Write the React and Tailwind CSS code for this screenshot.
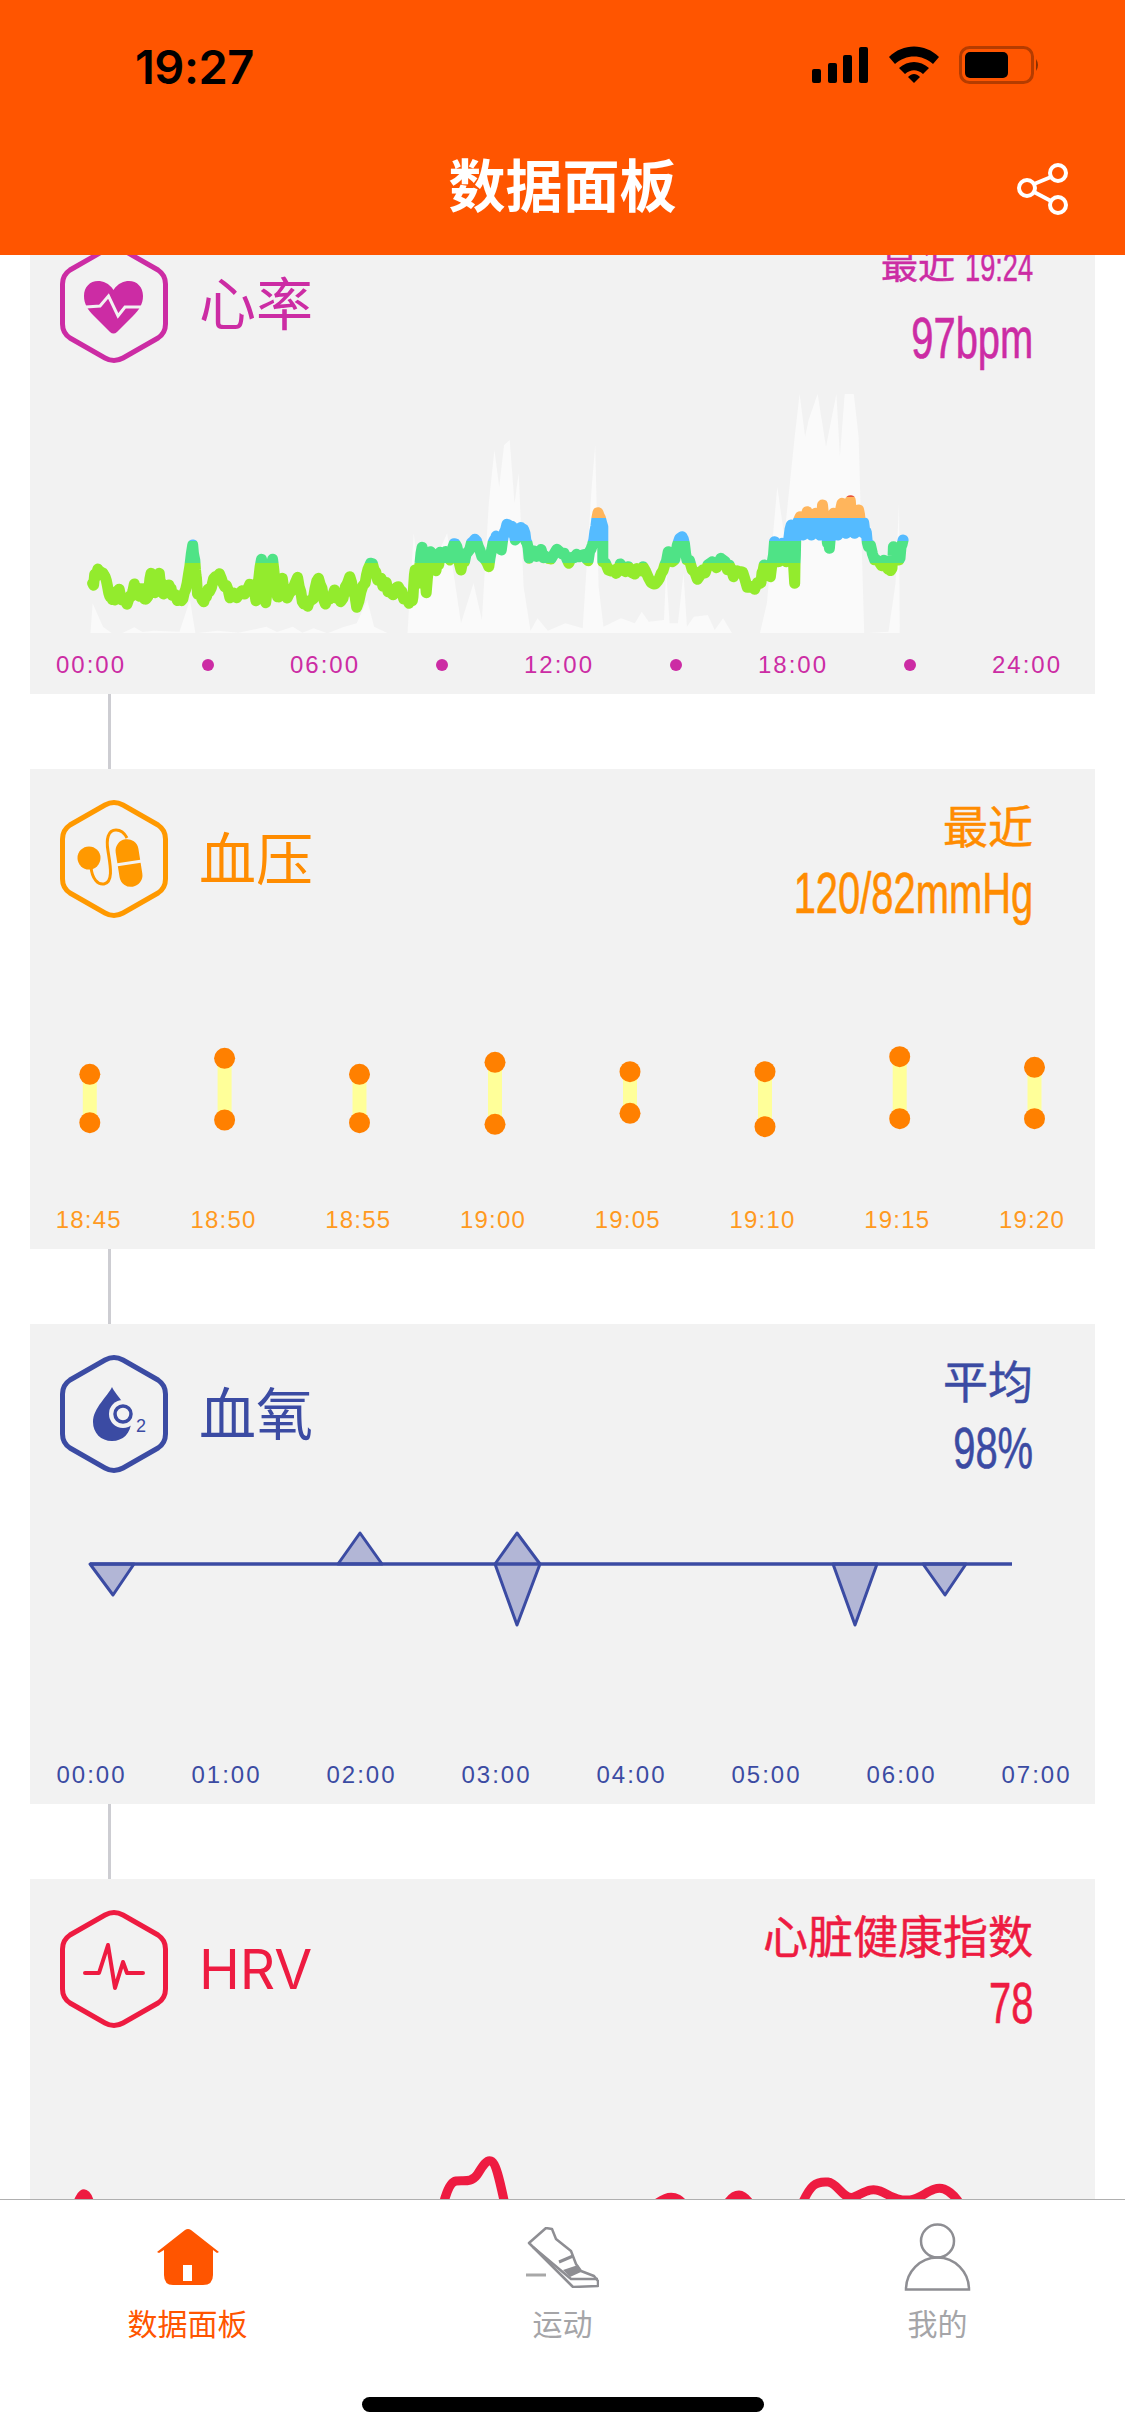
import React from "react";

const SANS = "font-['Liberation_Sans','Noto_Sans_CJK_SC',sans-serif]";

const HEX =
  "M45 6Q54 1 63 6L98 26Q105.5 31 105.5 40L105.5 80Q105.5 89 98 94L63 114Q54 119 45 114L10 94Q2.5 89 2.5 80L2.5 40Q2.5 31 10 26Z";

// traced from the chart, x and y are in stretched trace units, see toChart()
const HR_TRACE = [
  [90, 640], [96, 612], [102, 606], [108, 620], [115, 680], [122, 690], [127, 660], [132, 690], [142, 688], [150, 642], [156, 672],
  [162, 660], [168, 684], [174, 610], [180, 668], [186, 610], [192, 672], [200, 645], [206, 676], [218, 692], [226, 640], [234, 525],
  [238, 600], [241, 672], [250, 695], [258, 665], [270, 618], [280, 650], [290, 675], [305, 662], [320, 645], [325, 692], [333, 568],
  [339, 698], [349, 568], [356, 680], [363, 625], [370, 684], [385, 622], [394, 702], [405, 690], [415, 625], [425, 702], [438, 660],
  [447, 695], [460, 620], [470, 712], [482, 640], [490, 580], [500, 630], [510, 642], [520, 670], [530, 650], [540, 685], [550, 692],
  [554, 600], [558, 640], [564, 532], [570, 668], [576, 545], [584, 602], [592, 548], [604, 570], [612, 522], [620, 600], [630, 545],
  [640, 508], [650, 560], [660, 590], [666, 518], [672, 505], [678, 540], [684, 480], [692, 468], [698, 510], [704, 480], [712, 490], [718, 565],
  [732, 548], [745, 565], [762, 545], [775, 580], [790, 560], [803, 572], [811, 510], [817, 428], [824, 470], [824, 575], [840, 600], [852, 590],
  [870, 612], [882, 590], [897, 642], [908, 610], [918, 545], [924, 575], [938, 500], [945, 570], [960, 628], [975, 585], [1000, 575], [1012, 620],
  [1022, 605], [1035, 652], [1050, 640], [1056, 585], [1065, 620], [1071, 515], [1076, 575], [1082, 520], [1088, 575], [1095, 465], [1100, 640],
  [1102, 470], [1108, 440], [1112, 495], [1118, 425], [1124, 495], [1130, 430], [1136, 495], [1140, 405], [1146, 495], [1150, 535], [1156, 430],
  [1162, 495], [1168, 400], [1174, 490], [1180, 392], [1186, 490], [1192, 420], [1197, 480], [1200, 470], [1206, 530], [1218, 570], [1232, 585],
  [1240, 595], [1242, 530], [1250, 570], [1256, 510],
];

const HR_AREA = [
  [87, 790], [90, 700], [105, 770], [118, 790], [132, 790], [150, 772], [162, 786], [178, 782], [215, 785], [230, 690], [238, 790], [270, 782],
  [300, 788], [340, 770], [355, 786], [378, 770], [392, 788], [408, 775], [428, 790], [450, 772], [470, 760], [485, 690], [495, 770], [515, 790],
  [543, 790], [545, 720], [552, 490], [560, 620], [570, 540], [585, 560], [600, 490], [610, 620], [620, 760], [638, 640], [650, 750], [660, 400],
  [668, 240], [675, 350], [682, 225], [690, 210], [697, 400], [703, 310], [710, 650], [720, 782], [730, 745], [745, 782], [770, 760], [795, 775],
  [808, 350], [813, 225], [818, 650], [825, 770], [850, 745], [870, 760], [880, 725], [890, 755], [912, 750], [915, 600], [920, 760], [932, 760],
  [940, 610], [945, 770], [955, 740], [975, 735], [985, 780], [997, 745], [1010, 790], [1050, 790], [1060, 700], [1075, 350], [1085, 500], [1100, 200],
  [1107, 72], [1115, 200], [1120, 150], [1133, 72], [1145, 230], [1160, 72], [1165, 260], [1172, 72], [1185, 72], [1192, 200], [1200, 790],
  [1235, 785], [1245, 640], [1250, 400], [1251, 790],
];

const toChart = ([x, y]) => `${(x / 1.4385).toFixed(1)},${(y / 3 - 24).toFixed(1)}`;

// the real line is minute data, so roughen the traced one a bit
function roughen(trace) {
  const out = [];
  trace.forEach(([x, y], i) => {
    out.push([x, y]);
    const next = trace[i + 1];
    if (!next) return;
    for (let s = 1; s < 4; s++) {
      const t = s / 4;
      const r = Math.sin((i + s) * 12.9898) * 43758.5453;
      const jitter = (r - Math.floor(r) - 0.5) * 30;
      out.push([x + (next[0] - x) * t, y + (next[1] - y) * t + jitter]);
    }
  });
  return out;
}

const BP_X = [59.8, 194.6, 329.5, 465, 600, 735, 869.7, 1004.5];
const BP_TOP = [913, 865, 913, 877, 905, 905, 860, 892];
const BP_BOTTOM = [1058, 1050, 1058, 1063, 1030, 1070, 1046, 1046];

const O2_SHAPES = [
  "60,60 83,91 104,60",
  "308,60 330,29 352,60",
  "465,60 487,29 510,60 487,121",
  "803,60 825,121 847,60",
  "893,60 915,91 936,60",
];

function HeartIcon() {
  return (
    <>
      <path
        d="M53.5 46C49 39 43 37 38 37C30 37 24 43 24 52C24 60 28 66 34 72L50 88Q53.5 91 57 88L73 72C79 66 83 60 83 52C83 43 77 37 69 37C64 37 58 39 53.5 46Z"
        fill="currentColor"
      />
      <path d="M26 63L40 62L48.5 52L58 72L65 63L84 63" fill="none" stroke="#f2f2f2" strokeWidth="3" />
    </>
  );
}

function PressureIcon() {
  return (
    <>
      <circle cx="29" cy="59" r="11.5" fill="currentColor" />
      <path d="M31 68C32 80 38 86 44 85C54 83 50 65 48 52C46 40 48 31 56 31C61 31 65 35 67 39" fill="none" stroke="currentColor" strokeWidth="3" />
      <g transform="rotate(-9 69 64)">
        <rect x="57.5" y="40" width="23" height="48" rx="11.5" fill="currentColor" />
        <path d="M54 64L84 64" stroke="#f2f2f2" strokeWidth="3" />
      </g>
    </>
  );
}

function OxygenIcon() {
  return (
    <>
      <path d="M52 33C48 42 33 54 33 68C33 79 41 87 52 87C63 87 71 79 71 68C71 54 56 42 52 33Z" fill="currentColor" />
      <circle cx="63" cy="60" r="14" fill="#f2f2f2" />
      <circle cx="63" cy="60" r="8" fill="none" stroke="currentColor" strokeWidth="3.5" />
      <text x="76" y="78" fontSize="18" fill="currentColor" fontFamily="Liberation Sans">2</text>
    </>
  );
}

function PulseIcon() {
  return <path d="M25 64L39 64L48 36L55 79L63 53L67 64L83 64" fill="none" stroke="currentColor" strokeWidth="4" strokeLinejoin="round" strokeLinecap="round" />;
}

function HexBadge({ className, children }) {
  return (
    <svg viewBox="0 0 108 120" className={`h-[120px] w-[108px] shrink-0 ${className}`}>
      <path d={HEX} fill="none" stroke="currentColor" strokeWidth="5" />
      {children}
    </svg>
  );
}

function HeartChart() {
  const area = `0,239 ${HR_AREA.map(toChart).join(" ")}`;
  const line = roughen(HR_TRACE).map(toChart).join(" ");
  return (
    <svg viewBox="0 0 1065 239" className="block h-[239px] w-[1065px]">
      <defs>
        <linearGradient id="hrBands" gradientUnits="userSpaceOnUse" x1="0" y1="0" x2="0" y2="239">
          <stop offset="0.43" stopColor="#e8553a" />
          <stop offset="0.43" stopColor="#ffb55c" />
          <stop offset="0.5176" stopColor="#ffb55c" />
          <stop offset="0.5176" stopColor="#55bbff" />
          <stop offset="0.615" stopColor="#55bbff" />
          <stop offset="0.615" stopColor="#4fe386" />
          <stop offset="0.7085" stopColor="#4fe386" />
          <stop offset="0.7085" stopColor="#93eb2d" />
        </linearGradient>
      </defs>
      <polygon points={area} fill="#fafafa" />
      <polyline points={line} fill="none" stroke="url(#hrBands)" strokeWidth="11" strokeLinejoin="round" strokeLinecap="round" />
    </svg>
  );
}

function PressureChart() {
  return (
    <svg viewBox="0 0 1065 239" className="block h-[239px] w-[1065px]">
      {BP_X.map((x, i) => {
        const top = BP_TOP[i] / 3 - 179;
        const bottom = BP_BOTTOM[i] / 3 - 179;
        return (
          <g key={x}>
            <rect x={x - 7} y={top} width="14" height={bottom - top} fill="#ffff99" />
            <circle cx={x} cy={top} r="10.5" fill="#ff8000" />
            <circle cx={x} cy={bottom} r="10.5" fill="#ff8000" />
          </g>
        );
      })}
    </svg>
  );
}

function OxygenChart() {
  return (
    <svg viewBox="0 0 1065 239" className="block h-[239px] w-[1065px]">
      {O2_SHAPES.map((p) => (
        <polygon key={p} points={p} fill="#b2b6d6" stroke="#3b4ba3" strokeWidth="3" strokeLinejoin="round" />
      ))}
      <path d="M60 60L982 60" stroke="#3b4ba3" strokeWidth="3.5" />
    </svg>
  );
}

function HrvChart() {
  return (
    <svg viewBox="0 0 1065 239" className="block h-[239px] w-[1065px]">
      <path
        d="M40 170C46 150 50 130 56 136C62 142 64 170 70 190M404 190C410 165 414 124 426 122C434 121 441 124 447 116C451 110 456 100 461 102C467 104 472 130 484 190M620 150C632 139 640 136 648 140C656 144 670 170 680 170C688 170 695 136 709 136C720 136 730 165 745 190M770 150C780 125 786 122 798 123C808 124 814 142 824 138C834 134 840 128 850 132C860 136 866 142 880 141C892 140 902 126 914 130C922 133 930 140 945 175"
        fill="none"
        stroke="#ee1b41"
        strokeWidth="9"
        strokeLinecap="round"
      />
    </svg>
  );
}

function Axis({ labels, className }) {
  return (
    <div className={`grid h-[61px] items-center pt-[3px] text-[24px] ${className}`}>
      {labels.map((label, i) => (
        <div key={i} className="flex justify-center">
          {label === "dot" ? <span className="h-3 w-3 rounded-full bg-[#cc2ca4]" /> : label}
        </div>
      ))}
    </div>
  );
}

function Card({ tint, iconTint, axisTint, icon, title, titleClass, label, value, chart, axis }) {
  return (
    <section className={`mx-[30px] h-[480px] bg-[#f2f2f2] ${tint}`}>
      <div className="flex h-[180px] justify-between pl-[30px] pr-[62px] pt-[30px]">
        <div className="flex h-[120px] items-center gap-[31px]">
          <HexBadge className={iconTint}>{icon}</HexBadge>
          <span className={titleClass}>{title}</span>
        </div>
        <div className="-mt-[3px] flex flex-col items-end">
          <div className="flex h-[65px] items-center">{label}</div>
          <div className="flex h-[65px] items-center text-[57px] leading-none [-webkit-text-stroke:0.6px_currentColor]">
            <span className="inline-block origin-right scale-x-[.7] whitespace-nowrap">{value}</span>
          </div>
        </div>
      </div>
      {chart}
      <div className={axisTint}>{axis}</div>
    </section>
  );
}

function Connector() {
  return <div className="ml-[108px] h-[75px] w-[3px] bg-[#cdcdd2]" />;
}

function StatusBar() {
  return (
    <div className="flex h-[152px] items-start justify-between pl-[135px] pr-[84px] pt-[42px]">
      <span className="font-['Inter'] text-[47px] font-semibold leading-[50px] tracking-[-.5px] text-black">19:27</span>
      <svg viewBox="0 0 230 40" className="mt-[3px] h-[40px] w-[230px]">
        <rect x="1" y="24" width="9" height="14" rx="2" />
        <rect x="17" y="18" width="9" height="20" rx="2" />
        <rect x="32" y="10" width="9" height="28" rx="2" />
        <rect x="48" y="2" width="9" height="36" rx="2" />
        <path d="M78 12C92 -2 114 -2 128 12L122 19C111 9 95 9 84 19Z" />
        <path d="M88 23C97 15 109 15 118 23L112 29C106 24 100 24 94 29Z" />
        <path d="M97 32C101 28 105 28 109 32L103 38Z" />
        <rect x="149.5" y="2.5" width="72" height="35" rx="9" fill="none" stroke="#b53c00" strokeWidth="3" />
        <rect x="154" y="7" width="43" height="26" rx="5" />
        <path d="M225 14Q229 20 225 26Z" fill="#8a3000" />
      </svg>
    </div>
  );
}

function ShareIcon() {
  return (
    <svg viewBox="0 0 52 52" className="h-[52px] w-[52px]" fill="none" stroke="#fff" strokeWidth="4">
      <circle cx="10" cy="25" r="8" />
      <circle cx="41" cy="10" r="8" />
      <circle cx="41" cy="42" r="8" />
      <path d="M17 21L34 14M17 29L34 38" />
    </svg>
  );
}

function HomeTab() {
  return (
    <svg viewBox="0 0 62 56" className="h-[56px] w-[62px]">
      <path
        d="M28 1Q31 -1 34 1L62 23L60 24L56 21L56 46Q56 56 46 56L16 56Q7 56 7 46L7 21L2 24L0 23ZM26 36L26 52L35 52L35 36Z"
        fill="#ff5500"
        fillRule="evenodd"
      />
    </svg>
  );
}

function ShoeTab() {
  return (
    <svg viewBox="0 0 73 61" className="h-[61px] w-[73px]" fill="none" stroke="#8e8e93" strokeWidth="2.5" strokeLinejoin="round">
      <path d="M3 16L20 1L26 2L30 12L45 24L50 37L55 44L68 49L72 54L72 59L47 60Z" fill="#fff" />
      <path d="M7 20L45 52L72 52" />
      <path d="M33 35L47 29" strokeWidth="3" />
      <path d="M37 43L52 38L55 45L44 50Z" fill="#8e8e93" stroke="none" />
      <path d="M0 48L20 48" stroke="#a8a8a8" strokeWidth="3" />
    </svg>
  );
}

function PersonTab() {
  return (
    <svg viewBox="0 0 67 68" className="h-[68px] w-[67px]" fill="none" stroke="#8e8e93" strokeWidth="2.5">
      <circle cx="33.5" cy="18" r="16.5" />
      <path d="M2 66.5A31.5 32 0 0 1 65 66.5Z" />
    </svg>
  );
}

function Tab({ icon, label, active }) {
  return (
    <div className="flex flex-col items-center pt-[23px]">
      <div className="flex h-[68px] items-center">{icon}</div>
      <span className={`mt-[14px] text-[30px] leading-[40px] ${active ? "text-[#ff5500]" : "text-[#a5a5a8]"}`}>{label}</span>
    </div>
  );
}

export default function App() {
  return (
    <div className={`flex h-[2436px] w-[1125px] flex-col overflow-hidden bg-white ${SANS}`}>
      <header className="relative z-10 h-[255px] shrink-0 bg-[#ff5500]">
        <StatusBar />
        <div className="grid grid-cols-[1fr_auto_1fr] items-center">
          <span />
          <h1 className="text-[57px] font-bold leading-[70px] text-white">数据面板</h1>
          <div className="flex justify-end pr-[56px] pt-[4px]">
            <ShareIcon />
          </div>
        </div>
      </header>

      <main className="min-h-0 flex-1 overflow-hidden">
        <div className="-mt-[41px]">
          <Card
            tint="text-[#cc2ca4]"
            iconTint="text-[#cc2ca4]"
            axisTint="text-[#cc2ca4] tracking-[2px]"
            icon={<HeartIcon />}
            title="心率"
            titleClass="pt-[3px] text-[57px] font-normal"
            label={
              <div className="flex items-center justify-end gap-[12px] pb-[14px] text-[37px] leading-none [-webkit-text-stroke:0.5px_currentColor]">
                <span>最近</span>
                <span className="flex w-[66px] justify-end text-[40px]">
                  <span className="inline-block origin-right scale-x-[.68] whitespace-nowrap">19:24</span>
                </span>
              </div>
            }
            value="97bpm"
            chart={<HeartChart />}
            axis={
              <Axis
                className="ml-[2.5px] w-[1053px] grid-cols-9"
                labels={["00:00", "dot", "06:00", "dot", "12:00", "dot", "18:00", "dot", "24:00"]}
              />
            }
          />
          <Connector />
          <Card
            tint="text-[#ff8c00]"
            iconTint="text-[#ff9900]"
            axisTint="text-[#ff9a1f] tracking-[1.2px]"
            icon={<PressureIcon />}
            title="血压"
            titleClass="pt-[3px] text-[57px] font-normal"
            label={<span className="text-[45px] leading-none [-webkit-text-stroke:0.5px_currentColor]">最近</span>}
            value="120/82mmHg"
            chart={<PressureChart />}
            axis={
              <Axis
                className="-ml-[8.6px] w-[1078px] grid-cols-8"
                labels={["18:45", "18:50", "18:55", "19:00", "19:05", "19:10", "19:15", "19:20"]}
              />
            }
          />
          <Connector />
          <Card
            tint="text-[#3b4ba3]"
            iconTint="text-[#3b4ba3]"
            axisTint="text-[#3b4ba3] tracking-[2px]"
            icon={<OxygenIcon />}
            title="血氧"
            titleClass="pt-[3px] text-[57px] font-normal"
            label={<span className="text-[45px] leading-none [-webkit-text-stroke:0.5px_currentColor]">平均</span>}
            value="98%"
            chart={<OxygenChart />}
            axis={
              <Axis
                className="-ml-[6px] w-[1080px] grid-cols-8"
                labels={["00:00", "01:00", "02:00", "03:00", "04:00", "05:00", "06:00", "07:00"]}
              />
            }
          />
          <Connector />
          <Card
            tint="text-[#ee1b41]"
            iconTint="text-[#ee1b41]"
            axisTint="text-[#ee1b41]"
            icon={<PulseIcon />}
            title="HRV"
            titleClass="font-['Inter'] text-[55px] font-normal"
            label={<span className="text-[45px] leading-none [-webkit-text-stroke:0.5px_currentColor]">心脏健康指数</span>}
            value="78"
            chart={<HrvChart />}
            axis={null}
          />
        </div>
      </main>

      <nav className="relative z-10 flex h-[237px] shrink-0 flex-col border-t border-[#b0b0b0] bg-white">
        <div className="grid grid-cols-3">
          <Tab icon={<HomeTab />} label="数据面板" active />
          <Tab icon={<ShoeTab />} label="运动" />
          <Tab icon={<PersonTab />} label="我的" />
        </div>
        <div className="mx-auto mb-[24px] mt-auto h-[15px] w-[402px] rounded-full bg-black" />
      </nav>
    </div>
  );
}
